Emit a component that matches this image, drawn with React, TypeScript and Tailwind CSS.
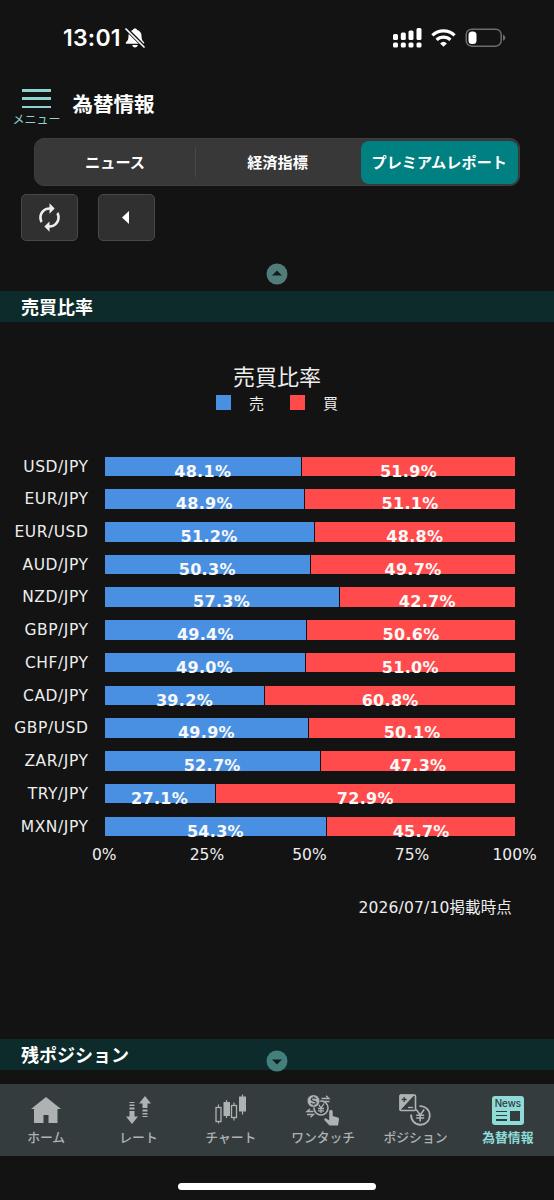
import type { ReactNode } from 'react';

interface PairRatio {
  pair: string;
  sell: number;
  buy: number;
}

const ratios: PairRatio[] = [
  { pair: 'USD/JPY', sell: 48.1, buy: 51.9 },
  { pair: 'EUR/JPY', sell: 48.9, buy: 51.1 },
  { pair: 'EUR/USD', sell: 51.2, buy: 48.8 },
  { pair: 'AUD/JPY', sell: 50.3, buy: 49.7 },
  { pair: 'NZD/JPY', sell: 57.3, buy: 42.7 },
  { pair: 'GBP/JPY', sell: 49.4, buy: 50.6 },
  { pair: 'CHF/JPY', sell: 49.0, buy: 51.0 },
  { pair: 'CAD/JPY', sell: 39.2, buy: 60.8 },
  { pair: 'GBP/USD', sell: 49.9, buy: 50.1 },
  { pair: 'ZAR/JPY', sell: 52.7, buy: 47.3 },
  { pair: 'TRY/JPY', sell: 27.1, buy: 72.9 },
  { pair: 'MXN/JPY', sell: 54.3, buy: 45.7 },
];

const axisTicks = ['0%', '25%', '50%', '75%', '100%'];

function StatusBar() {
  return (
    <div className="flex h-[75px] items-center pl-[63px]">
      <span className="w-[58px] whitespace-nowrap pt-[2px] font-['Inter','Liberation_Sans',sans-serif] text-[23px] leading-none font-semibold tracking-[0.250px]">
        13:01
      </span>
      <svg className="ml-[4px]" width="20" height="20" viewBox="0 0 20 20">
        <path
          d="M10 .5c-1.100 0-1.900.6-2.100 1.400C5 2.700 3.500 5 3.500 7.700c0 3.500-.8 4.800-2.300 6.300-.8.8-.5 1.800.7 1.800h16.200c1.200 0 1.500-1 .7-1.800-1.500-1.500-2.300-2.800-2.300-6.300 0-2.700-1.500-5-4.400-5.800C11.900 1.100 11.100.5 10 .5zM7.200 17h5.600c-.3 1.600-1.400 2.500-2.800 2.500S7.500 18.600 7.200 17z"
          fill="#fff"
        />
        <path d="M1.200.8l18 18" stroke="#131313" strokeWidth="3.800" />
        <path d="M1 1l18 18" stroke="#fff" strokeWidth="1.700" strokeLinecap="round" />
      </svg>
      <svg className="ml-[248px]" width="114" height="22" viewBox="0 0 114 22">
        <g fill="#fff">
          <rect x="0" y="7" width="5" height="6" rx="1.500" />
          <rect x="7.800" y="5.500" width="5" height="7.500" rx="1.500" />
          <rect x="15.500" y="3.500" width="5" height="9.500" rx="1.500" />
          <rect x="23.500" y="1" width="5" height="12" rx="1.500" />
          <rect x="0" y="15.500" width="5" height="5" rx="1.500" />
          <rect x="7.800" y="15.500" width="5" height="5" rx="1.500" />
          <rect x="15.500" y="15.500" width="5" height="5" rx="1.500" />
          <rect x="23.500" y="15.500" width="5" height="5" rx="1.500" />
          <path d="M50.500 19.800l-3.400-3.400a5 5 0 016.800 0z" />
        </g>
        <g fill="none" stroke="#fff" strokeWidth="3.200">
          <path d="M39.400 8.400a16 16 0 0122.200 0" />
          <path d="M43.600 12.800a10 10 0 0113.800 0" />
        </g>
        <rect x="73.200" y="2.200" width="35" height="17" rx="5.500" fill="none" stroke="#6d6d6d" strokeWidth="1.500" />
        <rect x="75.500" y="4.500" width="8" height="12.500" rx="3.500" fill="#fff" />
        <path d="M110 7.800c3 .8 3 5.200 0 6z" fill="#6d6d6d" />
      </svg>
    </div>
  );
}

function Header() {
  return (
    <header className="flex h-[63px] pl-3">
      <div className="flex w-12 flex-col items-center pt-[14px] text-[#8dd3d0]">
        <div className="flex h-[19px] w-[29px] flex-col justify-between">
          <span className="h-[2.500px] bg-[#8dd3d0]" />
          <span className="h-[2.500px] bg-[#8dd3d0]" />
          <span className="h-[2.500px] bg-[#8dd3d0]" />
        </div>
        <span className="mt-[5px] ml-px whitespace-nowrap text-[12px] leading-none">メニュー</span>
      </div>
      <h1 className="mt-[18px] ml-[12.500px] text-[20.500px] leading-none font-bold">為替情報</h1>
    </header>
  );
}

function Tabs() {
  return (
    <div className="mr-[34px] ml-[34px] flex h-[48px] items-center rounded-[10px] border border-[#3d3f3f] bg-[#383838] text-[15.200px] font-bold">
      <div className="w-[160px] pb-[2px] text-center">ニュース</div>
      <div className="h-[30px] w-px bg-[#484848]" />
      <div className="w-[165px] shrink-0 pr-[2px] pb-[2px] text-center">経済指標</div>
      <div className="flex h-[43px] w-[156.500px] items-center justify-center rounded-[8px] bg-[#008080] pb-[2px] whitespace-nowrap">
        プレミアムレポート
      </div>
    </div>
  );
}

function Toolbar() {
  return (
    <div className="mt-2 flex gap-5 pl-[20.500px]">
      <button className="flex h-[47px] w-[57px] items-center justify-center rounded-[5px] border border-[#484848] bg-[#303030]">
        <svg width="31" height="31" viewBox="0 0 24 24" fill="#eee">
          <path d="M12 6v3l4-4-4-4v3c-4.420 0-8 3.580-8 8 0 1.570.46 3.030 1.240 4.260L6.700 14.800A5.870 5.870 0 0 1 6 12c0-3.310 2.690-6 6-6zm6.760 1.740L17.300 9.200c.44.84.7 1.790.7 2.800 0 3.310-2.690 6-6 6v-3l-4 4 4 4v-3c4.420 0 8-3.580 8-8 0-1.570-.46-3.030-1.240-4.260z" />
        </svg>
      </button>
      <button className="flex h-[47px] w-[57px] items-center justify-center rounded-[5px] border border-[#484848] bg-[#303030] pr-[2px]">
        <svg width="7" height="13" viewBox="0 0 7 13">
          <path d="M7 0v13L0 6.500z" fill="#fff" />
        </svg>
      </button>
    </div>
  );
}

function ScrollHint({ down }: { down?: boolean }) {
  return (
    <svg width="22" height="22" viewBox="0 0 22 22">
      <circle cx="11" cy="11" r="10.500" fill={down ? '#43807d' : '#507d7a'} />
      <path d={down ? 'M6 9.500h10l-5 5z' : 'M6 12.500h10l-5-5z'} fill="#101c1c" />
    </svg>
  );
}

function SectionTitle({ children }: { children: ReactNode }) {
  return (
    <h2 className="flex h-[31px] items-center bg-[#0d2b2b] pb-px pl-[21px] text-[18px] leading-none font-bold">{children}</h2>
  );
}

function RatioChart() {
  return (
    <section className="h-[717px] pt-[41px] font-['DejaVu_Sans','Noto_Sans_CJK_JP',sans-serif] text-[#eee]">
      <h3 className="text-center font-['Noto_Sans_CJK_JP',sans-serif] text-[22px] leading-[24px]">売買比率</h3>
      <div className="mt-[7px] flex h-[16px] items-center pl-[216px] font-['Noto_Sans_CJK_JP',sans-serif] text-[15px] leading-none">
        <span className="size-[15px] bg-[#4a90e2]" />
        <span className="ml-[18px]">売</span>
        <span className="ml-[26px] size-[15px] bg-[#ff4b4b]" />
        <span className="ml-[18px]">買</span>
      </div>

      <div className="mt-[40px]">
        {ratios.map((row) => (
          <div key={row.pair} className="flex h-[32.720px] items-center">
            <span className="w-[88.500px] pt-[2px] text-right text-[15.500px] leading-none tracking-[0.550px]">{row.pair}</span>
            <div className="ml-[16px] flex h-[19.500px] w-[410.500px] text-[16px] leading-none font-bold tracking-[0.300px] text-[#f8f8f8]">
              <div
                className="flex items-start justify-center border-r border-[#131313] bg-[#4a90e2] pt-[7px]"
                style={{ width: `${row.sell}%` }}
              >
                {row.sell.toFixed(1)}%
              </div>
              <div className="flex items-start justify-center bg-[#ff4b4b] pt-[7px]" style={{ width: `${row.buy}%` }}>
                {row.buy.toFixed(1)}%
              </div>
            </div>
          </div>
        ))}
      </div>

      <div className="mt-[5px] ml-[53px] flex text-[15.500px] leading-none">
        {axisTicks.map((tick) => (
          <span key={tick} className="w-[102.600px] shrink-0 text-center">
            {tick}
          </span>
        ))}
      </div>
      <p className="mt-[38px] pr-[42px] text-right text-[15.500px] leading-none tracking-[0.150px]">2026/07/10掲載時点</p>
    </section>
  );
}

function HomeIcon() {
  return (
    <svg width="36" height="32" viewBox="0 0 36 32" fill="#aeb2b3">
      <path d="M18 3L33 15h-3.500v14H20.500v-8h-5v8H6V15H3z" />
    </svg>
  );
}

function RateIcon() {
  return (
    <svg width="36" height="32" viewBox="0 0 36 32" fill="#aeb2b3">
      <path d="M9.500 8h5v1h-5zM9.500 10.500h5V12h-5zM9.500 13.500h5v2h-5zM9.500 17h5v5.500h3.500l-6 7.500-6-7.500h3.500z" />
      <path d="M25 2l6 7.500h-3.500V14h-5V9.500H19zM22.500 15.500h5v2h-5zM22.500 19h5v1.500h-5zM22.500 22h5v1h-5z" />
    </svg>
  );
}

function ChartIcon() {
  return (
    <svg width="36" height="32" viewBox="0 0 36 32" fill="#aeb2b3" stroke="#aeb2b3">
      <path d="M5.500 10.500v19M13.500 6v18M21 8.500v18M29.500 0.500v20" strokeWidth="1.200" />
      <g fill="#353c3e" strokeWidth="1.300">
        <rect x="3" y="13.500" width="5" height="14" />
        <rect x="18.500" y="11.500" width="5" height="12" />
      </g>
      <rect x="11" y="8.500" width="5.500" height="13" />
      <rect x="26.500" y="3" width="6" height="14" />
    </svg>
  );
}

function OneTouchIcon() {
  return (
    <svg width="36" height="32" viewBox="0 0 36 32" fill="none" stroke="#aeb2b3">
      <path d="M16.500 4.500h7.500l-3-2.800M24.500 7.500H18l3 2.500M8.500 17.500H2l3-2.500M2 20.500h6.500l-3 2.700" strokeWidth="1.300" />
      <circle cx="16" cy="14" r="7" fill="#353c3e" strokeWidth="1.600" />
      <path d="M13 9.500l3 4.500 3-4.500M16 14v5M13 14.500h6M13 16.800h6" strokeWidth="1.300" />
      <circle cx="8.500" cy="7" r="6.300" fill="#aeb2b3" stroke="#353c3e" strokeWidth=".6" />
      <path d="M11 4.800c-.8-1.300-4.800-1.200-4.800.7 0 2.200 5 .9 5 3.200 0 1.900-4.200 2-5.200.3M8.500 2.500v1.500M8.500 10v1.500" stroke="#353c3e" strokeWidth="1.200" />
      <path
        d="M26 16c1 0 1.700.7 1.700 1.700V22l5 1.500c1 .3 1.500 1.100 1.300 2L33 31.500h-8.500l-5-5.300c-.9-1.100.4-2.500 1.700-1.700l3 1.900v-8.700c0-1 .8-1.700 1.800-1.700z"
        fill="#aeb2b3"
        stroke="none"
      />
    </svg>
  );
}

function PositionIcon() {
  return (
    <svg width="36" height="32" viewBox="0 0 36 32" fill="none" stroke="#aeb2b3">
      <path d="M3 1h14L3 16z" fill="#aeb2b3" />
      <rect x="3" y="1" width="15.500" height="15.500" rx="1" strokeWidth="1.600" />
      <path d="M7.200 3v5M4.700 5.500h5" stroke="#353c3e" strokeWidth="1.300" />
      <path d="M11 13.500h5" strokeWidth="1.300" />
      <path d="M22.500 12.200a9.300 9.300 0 11-8.300 8.300" strokeWidth="1.800" />
      <path d="M19.200 15.500l4 5.500 4-5.500M23.200 21v6.500M19.200 21.200h8M19.200 24h8" strokeWidth="1.600" />
    </svg>
  );
}

function NewsIcon() {
  return (
    <div className="flex h-[29px] w-8 flex-col items-center rounded-[3px] bg-[#8edbd8] text-[#353c3e]">
      <span className="mt-[2px] font-['Inter','Liberation_Sans',sans-serif] text-[9.800px] leading-[11px] font-medium">News</span>
      <div className="mt-[2px] flex gap-[3px]">
        <div className="flex w-[11px] flex-col justify-between">
          <span className="h-[1.500px] bg-[#353c3e]" />
          <span className="h-[1.500px] bg-[#353c3e]" />
          <span className="h-[1.500px] bg-[#353c3e]" />
        </div>
        <span className="h-[10px] w-[10px] bg-[#353c3e]" />
      </div>
    </div>
  );
}

const navItems = [
  { label: 'ホーム', icon: <HomeIcon /> },
  { label: 'レート', icon: <RateIcon /> },
  { label: 'チャート', icon: <ChartIcon /> },
  { label: 'ワンタッチ', icon: <OneTouchIcon /> },
  { label: 'ポジション', icon: <PositionIcon /> },
  { label: '為替情報', icon: <NewsIcon />, active: true },
];

function BottomNav() {
  return (
    <nav className="mt-[14px] grid h-[72px] grid-cols-6 bg-[#353c3e]">
      {navItems.map((item) => (
        <div
          key={item.label}
          className={`flex flex-col items-center pt-[10px] ${item.active ? 'font-bold text-[#8edbd8]' : 'font-medium text-[#aeb2b3]'}`}
        >
          <div className="flex h-8 items-center">{item.icon}</div>
          <span className="mt-[5px] whitespace-nowrap text-[12.800px] leading-none">{item.label}</span>
        </div>
      ))}
    </nav>
  );
}

export default function App() {
  return (
    <div className="h-[1200px] w-[554px] overflow-hidden bg-[#131313] font-['Noto_Sans_CJK_JP',sans-serif] text-white">
      <StatusBar />
      <Header />
      <Tabs />
      <Toolbar />
      <div className="flex h-[50px] items-end justify-center pb-[6px]">
        <ScrollHint />
      </div>
      <SectionTitle>売買比率</SectionTitle>
      <RatioChart />
      <div className="relative">
        <SectionTitle>残ポジション</SectionTitle>
        <div className="absolute top-[11px] left-[266px]">
          <ScrollHint down />
        </div>
      </div>
      <BottomNav />
      <div className="mx-auto mt-[27px] h-[7px] w-[198px] rounded-full bg-white" />
    </div>
  );
}
